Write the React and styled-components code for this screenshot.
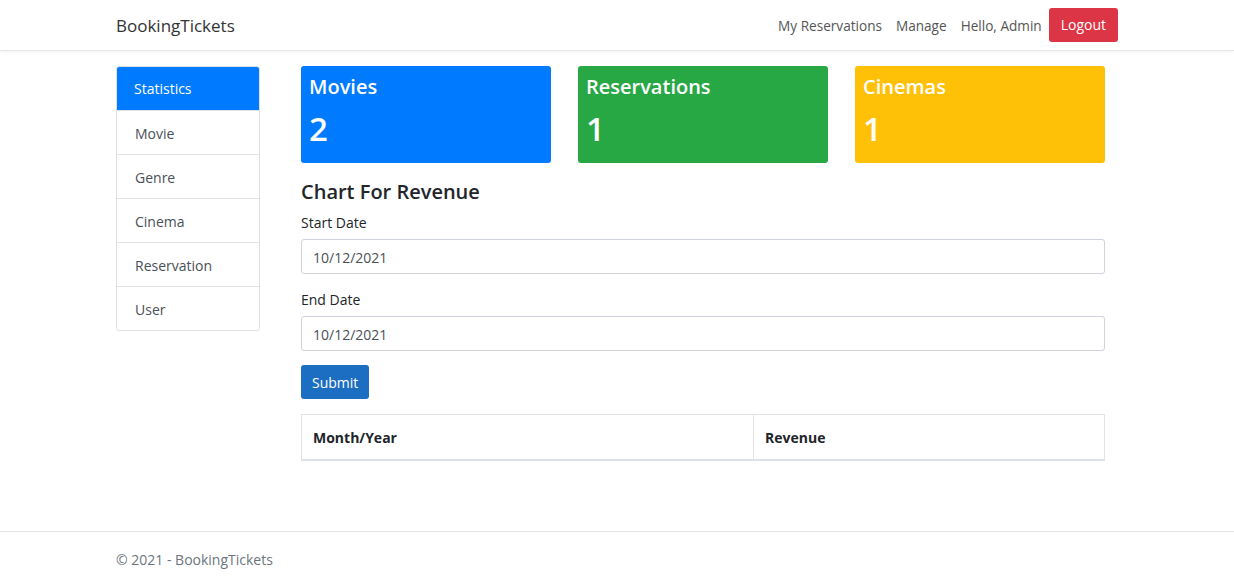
import React from 'react';
import styled, { createGlobalStyle } from 'styled-components';

const GlobalStyle = createGlobalStyle`
    html, body {
        margin: 0;
        padding: 0;
        background: #ffffff;
    }
    body {
        font-family: "Open Sans", "Noto Sans", sans-serif;
        font-size: 14px;
        color: #212529;
    }
    * {
        box-sizing: border-box;
    }
`;

const Page = styled.div`
    min-height: 586px;
    display: flex;
    flex-direction: column;
`;

const Navbar = styled.header`
    height: 51px;
    border-bottom: 1px solid #e5e5e5;
    box-shadow: 0 2px 4px rgba(0, 0, 0, 0.04);
`;

const Container = styled.div`
    width: 1002px;
    margin: 0 auto;
    height: 100%;
    display: flex;
    align-items: center;
`;

const Brand = styled.a`
    font-size: 17px;
    color: #333;
    text-decoration: none;
    margin-right: auto;
`;

const NavLink = styled.a`
    font-size: 13.6px;
    color: #555;
    text-decoration: none;
    margin-left: 14px;
`;

const LogoutButton = styled.button`
    margin-left: 7px;
    margin-top: -1px;
    height: 34px;
    padding: 0 12px;
    border: none;
    border-radius: 3px;
    background: #dc3545;
    color: #fff;
    font-family: inherit;
    font-size: 14px;
`;

const Main = styled.main`
    width: 1002px;
    margin: 15px auto 0;
    display: flex;
    gap: 41px;
    flex: 1;
`;

const Sidebar = styled.nav`
    width: 144px;
    flex-shrink: 0;
    align-self: flex-start;
    border: 1px solid #dfdfdf;
    border-radius: 3px;
    overflow: hidden;
`;

const SideItem = styled.div`
    height: 44px;
    padding: 1px 18px 0;
    display: flex;
    align-items: center;
    font-size: 14px;
    color: ${({ active }) => (active ? '#fff' : '#495057')};
    background: ${({ active }) => (active ? '#007bff' : '#fff')};
    border-top: ${({ first }) => (first ? 'none' : '1px solid #e2e2e2')};
    margin: ${({ active }) => (active ? '-1px -1px 0' : '0')};
`;

const Content = styled.section`
    width: 804px;
`;

const Cards = styled.div`
    display: flex;
    gap: 27px;
`;

const StatCard = styled.div`
    flex: 1;
    height: 97px;
    border-radius: 3px;
    background: ${({ color }) => color};
    color: #fff;
    padding: 6px 8px;
`;

const CardTitle = styled.div`
    font-size: 20px;
    font-weight: 600;
    line-height: 30px;
`;

const CardValue = styled.div`
    font-size: 33px;
    font-weight: 600;
    line-height: 46px;
    margin-top: 4px;
`;

const Heading = styled.h3`
    margin: 15px 0 5px;
    font-size: 20px;
    font-weight: 600;
    line-height: 28px;
    color: #212529;
`;

const Label = styled.div`
    font-size: 14px;
    line-height: 20px;
    padding-top: 2px;
    margin-bottom: 6px;
`;

const Field = styled.div`
    margin-bottom: 14px;
`;

const Input = styled.div`
    height: 35px;
    border: 1px solid #ced4da;
    border-radius: 3px;
    padding: 1px 11px 0;
    display: flex;
    align-items: center;
    font-size: 14px;
    color: #495057;
`;

const SubmitButton = styled.button`
    height: 34px;
    padding: 1px 11px 0;
    border: none;
    border-radius: 3px;
    background: #1b6ec2;
    color: #fff;
    font-family: inherit;
    font-size: 14px;
`;

const Table = styled.table`
    width: 804px;
    margin-top: 15px;
    border-collapse: collapse;
    border: 1px solid #e3e3e3;
`;

const Th = styled.th`
    text-align: left;
    height: 45px;
    padding: 1px 11px 0;
    font-size: 14px;
    font-weight: 700;
    color: #212529;
    border-left: 1px solid #e3e3e3;
    border-bottom: 2px solid #dee2e6;
    width: ${({ w }) => w || 'auto'};
`;

const Footer = styled.footer`
    margin-top: 70px;
    border-top: 1px solid #e2e2e2;
    height: 55px;
`;

const FooterText = styled.div`
    width: 1002px;
    margin: 0 auto;
    padding-top: 18px;
    font-size: 14px;
    color: #6c757d;
`;

const sideItems = ['Statistics', 'Movie', 'Genre', 'Cinema', 'Reservation', 'User'];

const stats = [
    { title: 'Movies', value: 2, color: '#007bff' },
    { title: 'Reservations', value: 1, color: '#28a745' },
    { title: 'Cinemas', value: 1, color: '#ffc107' },
];

export default function App() {
    return (
        <Page>
            <GlobalStyle />
            <Navbar>
                <Container>
                    <Brand>BookingTickets</Brand>
                    <NavLink>My Reservations</NavLink>
                    <NavLink>Manage</NavLink>
                    <NavLink>Hello, Admin</NavLink>
                    <LogoutButton>Logout</LogoutButton>
                </Container>
            </Navbar>
            <Main>
                <Sidebar>
                    {sideItems.map((item, i) => (
                        <SideItem key={item} active={i === 0} first={i === 0}>
                            {item}
                        </SideItem>
                    ))}
                </Sidebar>
                <Content>
                    <Cards>
                        {stats.map((s) => (
                            <StatCard key={s.title} color={s.color}>
                                <CardTitle>{s.title}</CardTitle>
                                <CardValue>{s.value}</CardValue>
                            </StatCard>
                        ))}
                    </Cards>
                    <Heading>Chart For Revenue</Heading>
                    <Field>
                        <Label>Start Date</Label>
                        <Input>10/12/2021</Input>
                    </Field>
                    <Field>
                        <Label>End Date</Label>
                        <Input>10/12/2021</Input>
                    </Field>
                    <SubmitButton>Submit</SubmitButton>
                    <Table>
                        <thead>
                            <tr>
                                <Th w="452px">Month/Year</Th>
                                <Th>Revenue</Th>
                            </tr>
                        </thead>
                    </Table>
                </Content>
            </Main>
            <Footer>
                <FooterText>© 2021 - BookingTickets</FooterText>
            </Footer>
        </Page>
    );
}
